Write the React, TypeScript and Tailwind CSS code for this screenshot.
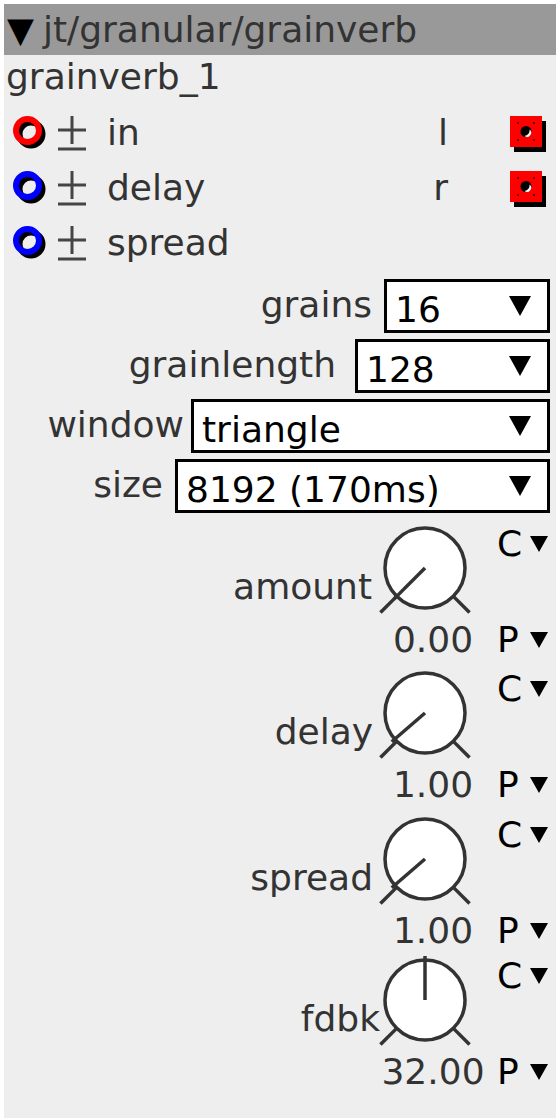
import React from 'react';

const Tri = ({ w, h }: { w: number; h: number }) => (
  <svg width={w} height={h} viewBox={`0 0 ${w} ${h}`}>
    <polygon points={`0,0 ${w},0 ${w / 2},${h}`} fill="#000" />
  </svg>
);

const Inlet = ({ color }: { color: string }) => (
  <svg width="38" height="38" viewBox="0 0 38 38">
    <circle cx="19" cy="19" r="11.5" fill="none" stroke="#000" strokeWidth="6" />
    <circle cx="15.5" cy="15.5" r="11.5" fill="none" stroke={color} strokeWidth="6" />
  </svg>
);

const PlusMinus = () => (
  <svg width="30" height="36" viewBox="0 0 30 36">
    <line x1="15" y1="1" x2="15" y2="29" stroke="#444" strokeWidth="3" />
    <line x1="1" y1="15" x2="29" y2="15" stroke="#444" strokeWidth="3" />
    <line x1="1" y1="34" x2="29" y2="34" stroke="#444" strokeWidth="3" />
  </svg>
);

const Outlet = () => (
  <svg width="40" height="40" viewBox="0 0 40 40">
    <rect x="4" y="5" width="32" height="31" fill="#000" />
    <rect x="0" y="0" width="32" height="31" fill="#ff0000" />
    <rect x="7" y="6" width="2" height="2" fill="#600" />
    <rect x="23" y="6" width="2" height="2" fill="#600" />
    <rect x="7" y="23" width="2" height="2" fill="#600" />
    <rect x="23" y="23" width="2" height="2" fill="#600" />
    <circle cx="16" cy="15.5" r="5.5" fill="#000" />
    <path d="M19.5 13.5 A4 4 0 0 1 14.5 20 A5.5 5.5 0 0 0 19.5 13.5 Z" fill="#fff" />
  </svg>
);

const Knob = ({ angle }: { angle: number }) => {
  const cx = 48;
  const cy = 44;
  const pt = (deg: number, r: number) => {
    const t = (deg * Math.PI) / 180;
    return [cx + r * Math.sin(t), cy - r * Math.cos(t)];
  };
  const [l1x, l1y] = pt(-135, 38);
  const [l2x, l2y] = pt(-135, 63);
  const [r1x, r1y] = pt(135, 38);
  const [r2x, r2y] = pt(135, 63);
  const [ix, iy] = pt(angle, 44);
  return (
    <svg width="96" height="92" viewBox="0 0 96 92">
      <line x1={l1x} y1={l1y} x2={l2x} y2={l2y} stroke="#333" strokeWidth="3.5" />
      <line x1={r1x} y1={r1y} x2={r2x} y2={r2y} stroke="#333" strokeWidth="3.5" />
      <circle cx={cx} cy={cy} r="40" fill="#fff" stroke="#333" strokeWidth="3.5" />
      <line x1={cx} y1={cy} x2={ix} y2={iy} stroke="#333" strokeWidth="3.5" />
    </svg>
  );
};

const InletRow = ({ color, label, out }: { color: string; label: string; out?: string }) => (
  <div className="flex h-[55px] items-center">
    <div className="ml-[8px] mt-[2px]">
      <Inlet color={color} />
    </div>
    <div className="ml-[7px]">
      <PlusMinus />
    </div>
    <div className="ml-[20px] leading-[40px] text-[#333]">{label}</div>
    <div className="flex-1" />
    {out && (
      <>
        <div className="w-[40px] text-right leading-[40px] text-[#333]">{out}</div>
        <div className="ml-[62px] mr-[6px] mt-[6px]">
          <Outlet />
        </div>
      </>
    )}
  </div>
);

const Combo = ({ label, value, width, gap }: { label: string; value: string; width: string; gap: string }) => (
  <div className="flex justify-end pr-[6px]">
    <div className={`mt-[6px] leading-[40px] text-[#333] ${gap}`}>{label}</div>
    <div className={`flex h-[54px] border-[3px] border-black bg-white ${width}`}>
      <div className="pl-[8px] pt-[8px] leading-[40px] text-black">{value}</div>
      <div className="ml-auto mr-[16px] self-center">
        <Tri w={22} h={20} />
      </div>
    </div>
  </div>
);

const KnobRow = ({
  label,
  value,
  angle,
  height,
  gap,
}: {
  label: string;
  value: string;
  angle: number;
  height: string;
  gap: string;
}) => (
  <div className={`flex justify-end pr-[8px] ${height}`}>
    <div className={`mt-[47px] leading-[40px] text-[#333] ${gap}`}>{label}</div>
    <div className="mt-[4px] flex w-[112px] flex-col">
      <Knob angle={angle} />
      <div className="mt-[4px] text-center leading-[40px] text-[#333]">{value}</div>
    </div>
    <div className="ml-[8px] flex w-[51px] flex-col leading-[36px] text-black">
      <div className="mt-[6px] flex items-center justify-between">
        <span>C</span>
        <Tri w={18} h={16} />
      </div>
      <div className="mt-[60px] flex items-center justify-between">
        <span>P</span>
        <Tri w={18} h={16} />
      </div>
    </div>
  </div>
);

export default function App() {
  return (
    <div className="min-h-screen bg-white pl-[4px] pt-[4px] font-['DejaVu_Sans',sans-serif] text-[36px]">
      <div className="flex h-[1114px] w-[552px] flex-col bg-[#eeeeee]">
        <div className="flex h-[51px] items-center bg-[#999999] pl-[3px] leading-[40px] text-[#333]">
          <span className="text-[35px] text-black">▼</span>
          <span className="ml-[9px]">jt/granular/grainverb</span>
        </div>
        <div className="h-[50px] pl-[2px] pt-[2px] leading-[40px] text-[#333]">grainverb_1</div>
        <InletRow color="#ff0000" label="in" out="l" />
        <InletRow color="#0000ff" label="delay" out="r" />
        <InletRow color="#0000ff" label="spread" />
        <div className="mt-[9px] flex flex-col gap-[6px]">
          <Combo label="grains" value="16" width="w-[166px]" gap="mr-[12px]" />
          <Combo label="grainlength" value="128" width="w-[195px]" gap="mr-[19px]" />
          <Combo label="window" value="triangle" width="w-[359px]" gap="mr-[7px]" />
          <Combo label="size" value="8192 (170ms)" width="w-[375px]" gap="mr-[12px]" />
        </div>
        <div className="mt-[7px] flex flex-col">
          <KnobRow label="amount" value="0.00" angle={-135} height="h-[145px]" gap="mr-[5px]" />
          <KnobRow label="delay" value="1.00" angle={-130.8} height="h-[146px]" gap="mr-[4px]" />
          <KnobRow label="spread" value="1.00" angle={-130.8} height="h-[141px]" gap="mr-[4px]" />
          <KnobRow label="fdbk" value="32.00" angle={0} height="h-[145px]" gap="mr-[-3px]" />
        </div>
      </div>
    </div>
  );
}
